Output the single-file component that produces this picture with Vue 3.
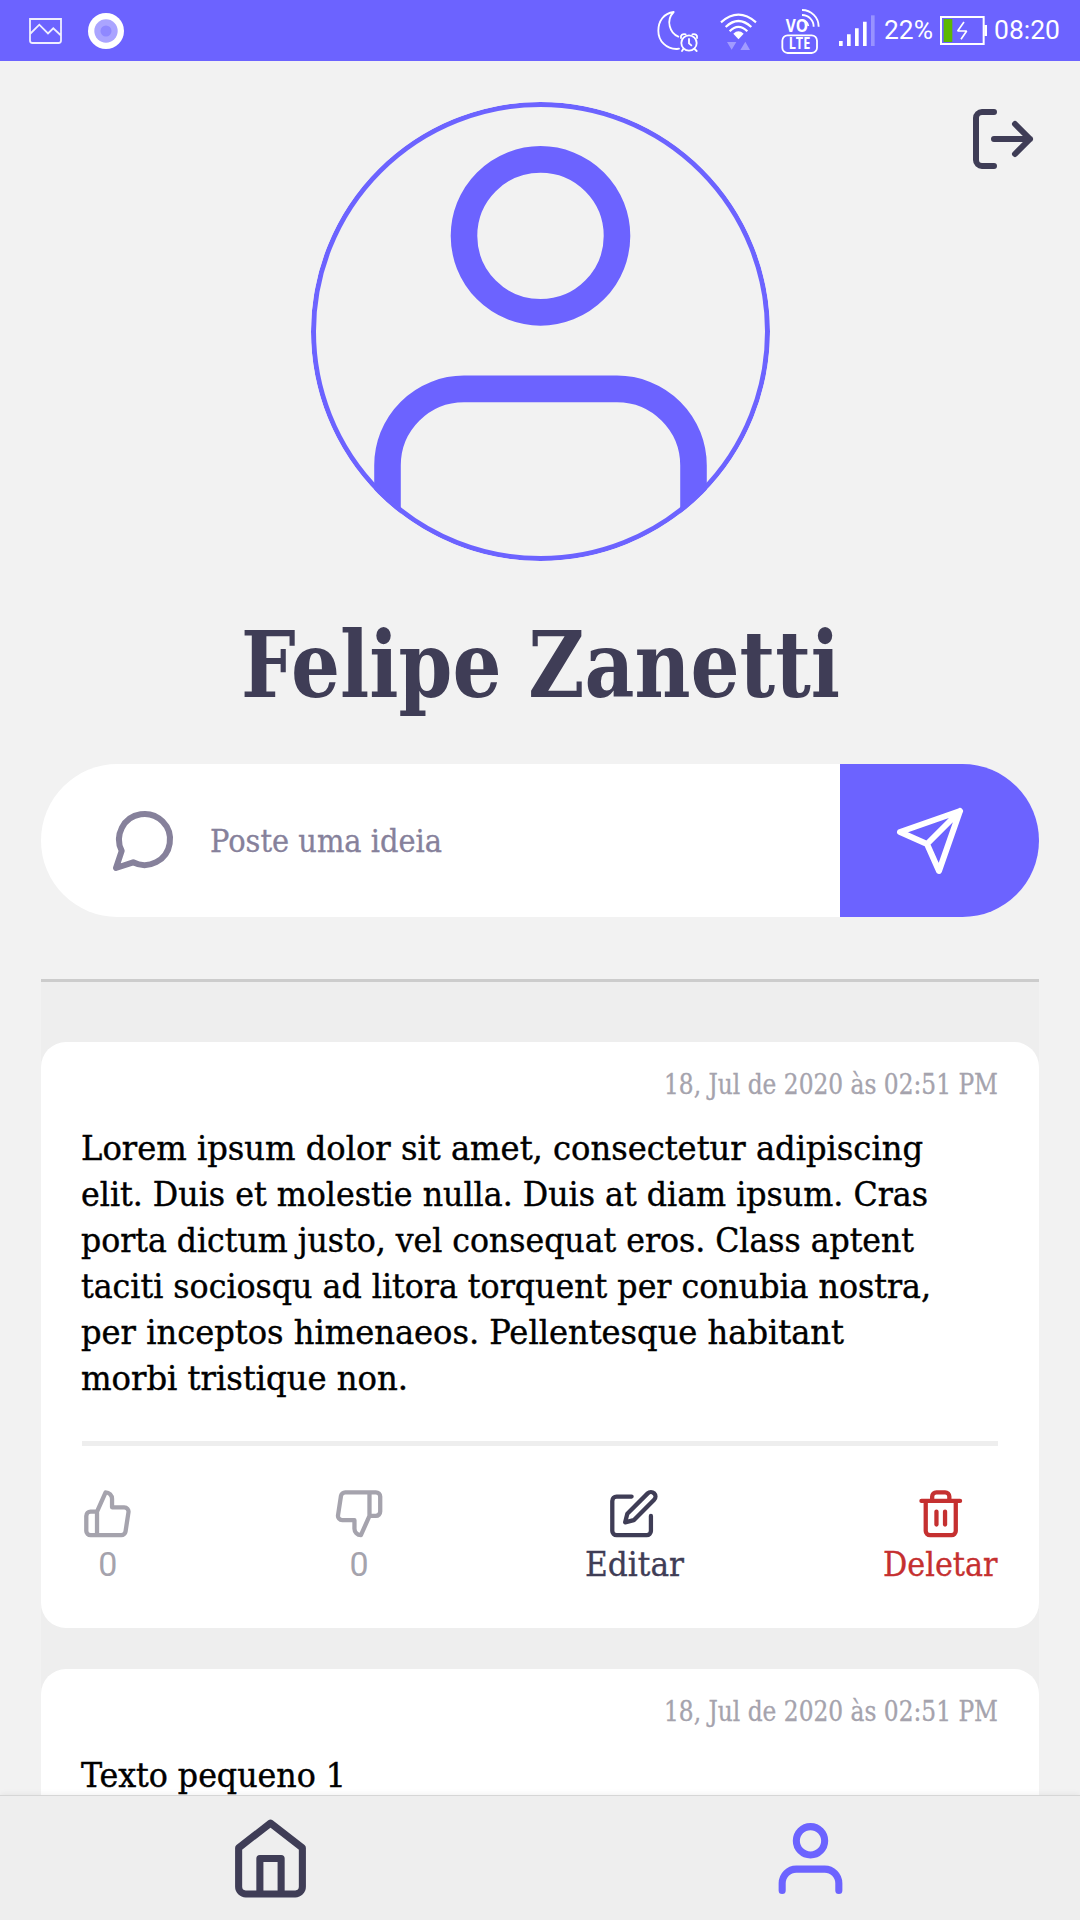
<script setup>
const posts = [
  {
    date: '18, Jul de 2020 às 02:51 PM',
    lines: [
      { text: 'Lorem ipsum dolor sit amet, consectetur adipiscing', width: 842 },
      { text: 'elit. Duis et molestie nulla. Duis at diam ipsum. Cras', width: 847 },
      { text: 'porta dictum justo, vel consequat eros. Class aptent', width: 833 },
      { text: 'taciti sociosqu ad litora torquent per conubia nostra,', width: 850 },
      { text: 'per inceptos himenaeos. Pellentesque habitant', width: 763 },
      { text: 'morbi tristique non.', width: 327 },
    ],
    likes: 0,
    dislikes: 0,
    expanded: true,
  },
  {
    date: '18, Jul de 2020 às 02:51 PM',
    lines: [{ text: 'Texto pequeno 1', width: 265 }],
    expanded: false,
  },
]

// Condenses a line of text horizontally so that it takes the given width.
const vFit = {
  mounted(el, { value }) {
    const natural = el.getBoundingClientRect().width
    el.style.transform = `scaleX(${value / natural})`
    el.style.marginRight = `${value - natural}px`
  },
}
</script>

<template>
  <div class="screen">
    <header class="status">
      <svg class="s-image" viewBox="0 0 33 26" fill="none" stroke="#efeeff" stroke-width="1.8">
        <path d="M1 1h31v21.500a2.500 2.500 0 0 1-2.500 2.500h-26a2.500 2.500 0 0 1-2.500-2.500zM1 16 10.300 6.700 19 15.500 24.300 10.300 32 17.500" />
      </svg>
      <svg class="s-ring" viewBox="0 0 36 36">
        <circle cx="18" cy="18" r="18" fill="#fff" />
        <circle cx="18" cy="18" r="11.700" fill="#aaa4ff" />
        <circle cx="18" cy="18" r="5.500" fill="#8f88ff" />
      </svg>
      <span class="grow"></span>
      <svg class="s-moon" viewBox="50 30 126 129" fill="none" stroke="#fff" stroke-width="5.500" stroke-linecap="round">
        <path d="M100 36C70 40 54 63 54 92c0 32 25 56 56 55l6-1M100 36c-25 26-11 64 14 74" />
        <circle cx="146" cy="129" r="23" />
        <path d="M146 117v13l7 6M122 114c-2-8 5-14 14-11M170 114c2-8-5-14-14-11M129 147l-4 6M163 147l6 6" />
      </svg>
      <svg class="s-wifi" viewBox="240 36 111 117" fill="none" stroke="#fff" stroke-width="6.500">
        <path d="M243 67q52-46 105 0M257 81q38-36 77 0M269 94q26-27 53 0" />
        <path d="M280 101q15-14 31 0l-15.500 17z" fill="#fff" stroke="none" />
        <path d="M261 126h28l-14 23zM301 150h29l-14-25z" fill="#a19bff" stroke="none" />
      </svg>
      <svg class="s-volte" viewBox="423 22 117 138" fill="none" stroke="#fff" stroke-width="5.500">
        <rect x="427" y="104" width="104" height="53" rx="16" />
        <path d="M486 28a50 50 0 0 1 50 50M486 43a35 35 0 0 1 35 35M486 59a19 19 0 0 1 19 17" />
        <g fill="#fff" stroke="none" font-family="'Open Sans', sans-serif" font-weight="700">
          <text x="437" y="95" font-size="52" textLength="67" lengthAdjust="spacingAndGlyphs">VO</text>
          <text x="446" y="145" font-size="46" textLength="65" lengthAdjust="spacingAndGlyphs">LTE</text>
        </g>
      </svg>
      <svg class="s-signal" viewBox="597 44 108 94" fill="#fff">
        <path d="M597 122h11v16h-11zM621 102h11v36h-11zM645 84h11v54h-11zM669 64h11v74h-11z" />
        <path d="M693 45h11v93h-11z" fill="#9892ff" />
      </svg>
      <span class="pct"><span v-fit="49" class="fit">22%</span></span>
      <svg class="s-battery" viewBox="900 48 141 87">
        <rect x="903" y="51" width="128" height="81" fill="none" stroke="#fff" stroke-width="6" />
        <path d="M1033 75h8v33h-8z" fill="#fff" />
        <path d="M911 57h26v69h-26z" fill="#5cb800" />
        <path d="M972 66 953 93h27l-17 25" fill="none" stroke="#fff" stroke-width="5" stroke-linejoin="bevel" />
      </svg>
      <span class="clock"><span v-fit="66" class="fit">08:20</span></span>
    </header>

    <section class="profile">
      <div class="avatar">
        <svg viewBox="0 0 24 24" fill="none" stroke="#6c63ff" stroke-width="1.390">
          <circle cx="12" cy="7" r="4" />
          <path d="M20 22.500V19a4 4 0 0 0-4-4H8a4 4 0 0 0-4 4v3.500" />
        </svg>
      </div>
      <svg class="icon logout" viewBox="0 0 24 24">
        <path d="M9 21H5a2 2 0 0 1-2-2V5a2 2 0 0 1 2-2h4M16 17l5-5-5-5M21 12H9" />
      </svg>
      <h1><span v-fit="599" class="fit">Felipe Zanetti</span></h1>
    </section>

    <div class="composer">
      <div class="field">
        <svg class="icon" viewBox="0 0 24 24">
          <path d="M8.700 19.100 3 21l1.900-5.700A8.500 8.500 0 1 1 8.700 19.100z" />
        </svg>
        <span class="placeholder"><span v-fit="232" class="fit">Poste uma ideia</span></span>
      </div>
      <div class="send">
        <svg class="icon" viewBox="0 0 24 24">
          <path d="M22 2 11 13M22 2l-7 20-4-9-9-4z" />
        </svg>
      </div>
    </div>

    <main class="feed">
      <article v-for="(post, i) in posts" :key="i" class="card">
        <div class="date"><span v-fit="334" class="fit">{{ post.date }}</span></div>
        <div class="body">
          <div v-for="line in post.lines" :key="line.text" class="line">
            <span v-fit="line.width" class="fit">{{ line.text }}</span>
          </div>
        </div>
        <div v-if="post.expanded" class="actions">
          <div class="action muted">
            <svg class="icon" viewBox="0 0 24 24">
              <path d="M14 9V5a3 3 0 0 0-3-3l-4 9v11h11.280a2 2 0 0 0 2-1.700l1.380-9a2 2 0 0 0-2-2.300zM7 22H4a2 2 0 0 1-2-2v-7a2 2 0 0 1 2-2h3" />
            </svg>
            <span class="count">{{ post.likes }}</span>
          </div>
          <div class="action muted">
            <svg class="icon" viewBox="0 0 24 24">
              <path d="M10 15v4a3 3 0 0 0 3 3l4-9V2H5.720a2 2 0 0 0-2 1.700l-1.380 9a2 2 0 0 0 2 2.300zM17 2h3a2 2 0 0 1 2 2v7a2 2 0 0 1-2 2h-3" />
            </svg>
            <span class="count">{{ post.dislikes }}</span>
          </div>
          <div class="action edit">
            <svg class="icon" viewBox="0 0 24 24">
              <path d="M11 4H4a2 2 0 0 0-2 2v14a2 2 0 0 0 2 2h14a2 2 0 0 0 2-2v-7M18.500 2.500a2.121 2.121 0 0 1 3 3L12 15l-4 1 1-4z" />
            </svg>
            <span class="label"><span v-fit="99" class="fit">Editar</span></span>
          </div>
          <div class="action delete">
            <svg class="icon" viewBox="0 0 24 24">
              <path d="M3 6h18M19 6v14a2 2 0 0 1-2 2H7a2 2 0 0 1-2-2V6M8 6V4a2 2 0 0 1 2-2h4a2 2 0 0 1 2 2v2M10 11v6M14 11v6" />
            </svg>
            <span class="label"><span v-fit="114.500" class="fit">Deletar</span></span>
          </div>
        </div>
      </article>
    </main>

    <nav class="tabs">
      <div class="tab">
        <svg class="icon" viewBox="0 0 24 24">
          <path d="M3 9l9-7 9 7v11a2 2 0 0 1-2 2H5a2 2 0 0 1-2-2zM9 22V12h6v10" />
        </svg>
      </div>
      <div class="tab active">
        <svg class="icon" viewBox="0 0 24 24">
          <path d="M20 21v-2a4 4 0 0 0-4-4H8a4 4 0 0 0-4 4v2" />
          <circle cx="12" cy="7" r="4" />
        </svg>
      </div>
    </nav>
  </div>
</template>

<style>
body {
  margin: 0;
}
</style>

<style scoped>
.screen {
  width: 1080px;
  height: 1920px;
  display: flex;
  flex-direction: column;
  overflow: hidden;
  background: #f2f2f2;
  color: #3f3d56;
  font-family: 'Roboto Slab', 'DejaVu Serif Condensed', 'DejaVu Serif', serif;
}
svg {
  display: block;
  flex: none;
}
.fit {
  display: inline-block;
  white-space: nowrap;
  transform-origin: left center;
}
.icon {
  fill: none;
  stroke: currentColor;
  stroke-width: 2;
  stroke-linecap: round;
  stroke-linejoin: round;
}

.status {
  flex: none;
  box-sizing: border-box;
  height: 61px;
  padding: 0 20px 0 29px;
  display: flex;
  align-items: center;
  background: #6c63ff;
  color: #fff;
  font-family: Roboto, sans-serif;
  font-size: 26px;
  line-height: 61px;
}
.grow { flex: 1; }
.s-image { width: 33px; height: 26px; }
.s-ring { width: 36px; height: 36px; margin-left: 26px; }
.s-moon { width: 42px; height: 43px; margin: 2px 21px 0 0; }
.s-wifi { width: 37px; height: 39px; margin: 2px 24px 0 0; }
.s-volte { width: 39px; height: 46px; margin-right: 19px; }
.s-signal { width: 36px; height: 31.300px; margin-right: 9px; }
.pct { width: 49px; margin-right: 7px; }
.s-battery { width: 47px; height: 29px; margin-right: 7px; }
.clock { width: 66px; }
.pct, .clock { height: 61px; }

.profile {
  position: relative;
  flex: none;
  display: flex;
  flex-direction: column;
  align-items: center;
  padding-top: 41px;
}
.avatar {
  position: relative;
  width: 459px;
  height: 459px;
  border-radius: 50%;
  overflow: hidden;
}
.avatar::after {
  content: '';
  position: absolute;
  inset: 0;
  border: 5px solid #6c63ff;
  border-radius: 50%;
}
.logout {
  position: absolute;
  top: 42px;
  right: 41px;
  width: 72px;
  height: 72px;
}
h1 {
  margin: 44px 0 39px;
  font-size: 92px;
  line-height: 120px;
  font-weight: 700;
}

.composer {
  flex: none;
  display: flex;
  height: 153px;
  margin: 0 41px 62px;
  border-radius: 76.500px;
  overflow: hidden;
  background: #fff;
}
.composer .icon {
  width: 72px;
  height: 72px;
}
.field {
  flex: 1;
  display: flex;
  align-items: center;
  padding-left: 66px;
  color: #86819b;
}
.placeholder {
  margin-left: 31px;
  font-size: 31px;
  line-height: 40px;
  -webkit-text-stroke: 0.300px currentColor;
}
.send {
  width: 199px;
  box-sizing: border-box;
  padding-left: 54px;
  display: flex;
  align-items: center;
  background: #6c63ff;
  color: #fff;
}

.feed {
  flex: 1;
  min-height: 0;
  overflow: hidden;
  margin: 0 41px;
  padding-top: 60px;
  border-top: 3px solid #ccc;
  background: #eee;
}
.card {
  box-sizing: border-box;
  min-height: 586px;
  margin-bottom: 41px;
  padding: 25px 41px 40px;
  border-radius: 25px;
  background: #fff;
}
.date {
  text-align: right;
  color: #a5a3ad;
  font-size: 27px;
  line-height: 36px;
  height: 36px;
  -webkit-text-stroke: 0.300px currentColor;
}
.body {
  margin: 22px 0 40px -1px;
  color: #000;
  font-size: 34px;
  -webkit-text-stroke: 0.400px currentColor;
}
.line {
  height: 46px;
  line-height: 46px;
}
.actions {
  display: flex;
  justify-content: space-between;
  border-top: 5px solid #eee;
  padding-top: 42px;
  font-size: 34px;
  line-height: 46px;
}
.action {
  display: flex;
  flex-direction: column;
  align-items: center;
}
.action .icon {
  width: 51.500px;
  height: 51.500px;
  margin-bottom: 1.500px;
}
.label,
.count {
  height: 47px;
}
.label {
  -webkit-text-stroke: 0.300px currentColor;
}
.count {
  font-family: Roboto, sans-serif;
}
.muted { color: #a5a3ad; }
.delete { color: #c53030; }

.tabs {
  position: relative;
  flex: none;
  height: 124px;
  display: flex;
  border-top: 1px solid #d6d6d6;
  background: #eee;
  box-shadow: 0 -1px 6px rgba(0, 0, 0, 0.06);
}
.tab {
  flex: 1;
  display: flex;
  align-items: center;
  justify-content: center;
}
.tab .icon {
  width: 85px;
  height: 85px;
}
.active { color: #6c63ff; }
</style>
